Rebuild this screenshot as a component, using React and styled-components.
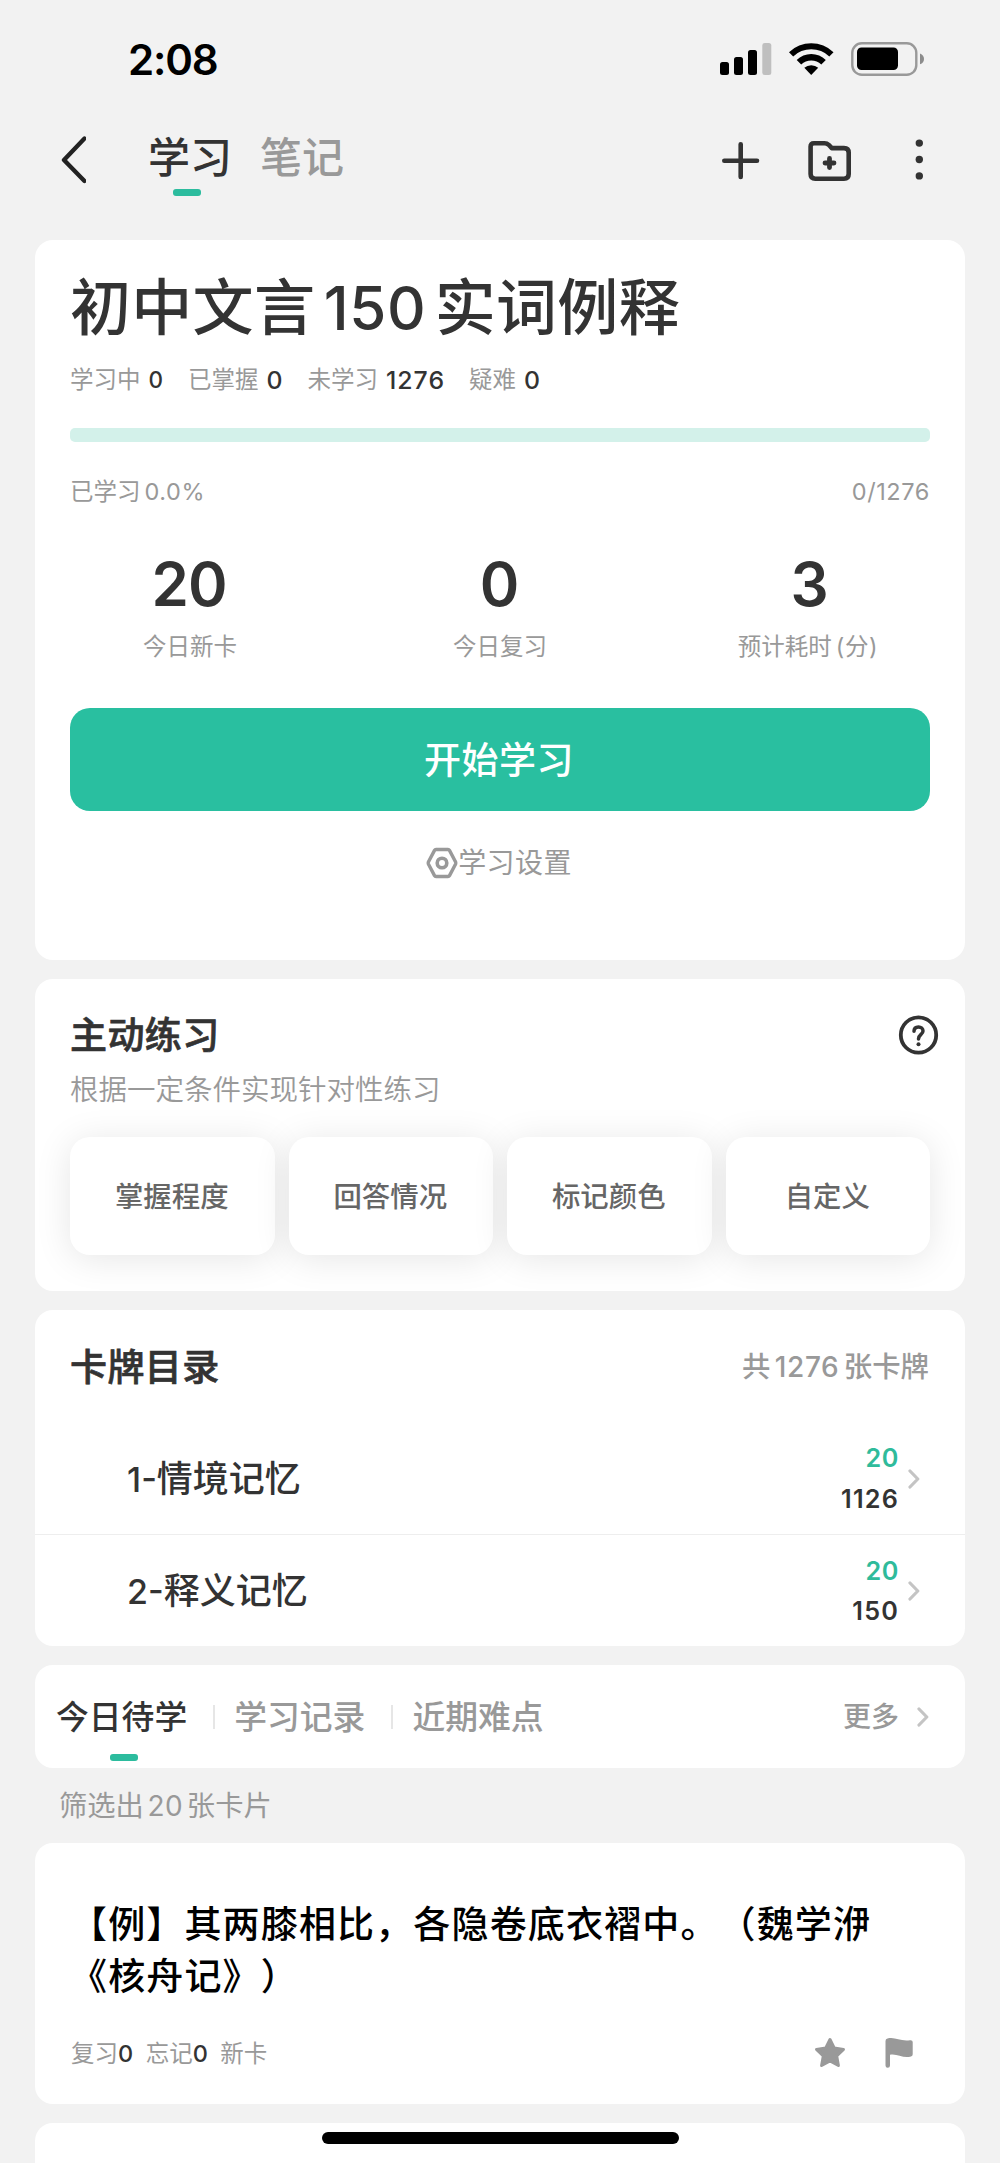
import styled, { createGlobalStyle } from "styled-components";

const GlobalStyle = createGlobalStyle`
  * {
    box-sizing: border-box;
  }

  body {
    margin: 0;
    background: #f2f2f2;
    color: #333;
    font-family: Inter, "Noto Sans CJK SC", sans-serif;
    text-spacing-trim: space-all;
  }
`;

const Screen = styled.div`
  position: relative;
  width: 1000px;
  height: 2163px;
  overflow: hidden;
  background: #f2f2f2;
`;

const StatusBar = styled.div`
  display: flex;
  align-items: center;
  height: 118px;
  padding: 0 76px 0 128px;
`;

const Time = styled.span`
  flex: 1;
  padding-top: 2px;
  font-size: 42px;
  line-height: 50px;
  font-weight: 600;
  letter-spacing: -1.2px;
  color: #000;
`;

const NavBar = styled.div`
  display: flex;
  align-items: center;
  height: 84px;
  padding: 0 76px 0 60px;
`;

const NavTabs = styled.div`
  display: flex;
  flex: 1;
  gap: 28px;
  margin-left: 62px;
`;

const NavTab = styled.div`
  position: relative;
  height: 84px;
  font-size: 42px;
  line-height: 79px;
  font-weight: 500;
  color: ${(props) => (props.$active ? "#333" : "#999")};
`;

const Underline = styled.span`
  position: absolute;
  left: 50%;
  bottom: ${(props) => props.$bottom}px;
  width: 28px;
  height: 7px;
  margin-left: ${(props) => props.$shift}px;
  border-radius: 3px;
  background: #2cbc9e;
`;

const NavActions = styled.div`
  display: flex;
  align-items: center;
`;

const Content = styled.div`
  display: flex;
  flex-direction: column;
  gap: 19px;
  padding: 38px 35px 0;
`;

const Card = styled.section`
  flex: none;
  height: ${(props) => props.$height}px;
  border-radius: 18px;
  background: #fff;
  overflow: hidden;
`;

const DeckCard = styled(Card)`
  padding: 28px 35px 0;
`;

const DeckTitle = styled.h1`
  margin: 0;
  font-size: 61px;
  line-height: 80px;
  font-weight: 500;
  letter-spacing: 0.3px;
  white-space: nowrap;
`;

const Num = styled.span`
  margin: 0 ${(props) => props.$gap}px;
  font-size: ${(props) => props.$size}px;
  line-height: 1;
  letter-spacing: 0.6px;
`;

const Stats = styled.div`
  display: flex;
  gap: 24px;
  margin-top: 17px;
`;

const Stat = styled.div`
  display: flex;
  gap: 8px;
  font-size: 23.5px;
  line-height: 30px;
  color: #999;
`;

const StatValue = styled.span`
  font-size: ${(props) => (props.$small ? 22.5 : 24.8)}px;
  font-weight: 500;
  letter-spacing: 1px;
  color: #333;
`;

const Progress = styled.div`
  height: 14px;
  margin-top: 33px;
  border-radius: 5px;
  background: #d3f1ea;
`;

const ProgressBar = styled.div`
  height: 100%;
  border-radius: 5px;
  background: #29bfa0;
`;

const ProgressInfo = styled.div`
  display: flex;
  justify-content: space-between;
  margin-top: 35px;
  font-size: 23.5px;
  line-height: 30px;
  color: #999;
`;

const ProgressCount = styled.span`
  letter-spacing: 0.6px;
`;

const Metrics = styled.div`
  display: grid;
  grid-template-columns: repeat(3, 1fr);
  margin: 45px -35px 0;
  text-align: center;
`;

const MetricValue = styled.div`
  padding-right: 2px;
  font-size: 60px;
  line-height: 64px;
  font-weight: 600;
  letter-spacing: -1px;
`;

const MetricLabel = styled.div`
  margin-top: 16px;
  font-size: 23.5px;
  line-height: 30px;
  color: #999;
`;

const StartButton = styled.button`
  display: block;
  width: 100%;
  height: 103px;
  margin-top: 46px;
  padding: 2px 2px 0 0;
  border: none;
  border-radius: 20px;
  background: #29bfa0;
  color: #fff;
  font: 500 37px/60px Inter, "Noto Sans CJK SC", sans-serif;
  letter-spacing: 0.5px;
`;

const Settings = styled.div`
  display: flex;
  justify-content: center;
  align-items: center;
  margin-top: 34px;
  padding-right: 2px;
  font-size: 28px;
  line-height: 36px;
  letter-spacing: 0.4px;
  color: #999;
`;

const PracticeCard = styled(Card)`
  padding: 33px 35px 0;
`;

const CardHeader = styled.div`
  display: flex;
  justify-content: space-between;
  align-items: center;
  height: ${(props) => props.$height}px;
`;

const CardTitle = styled.h2`
  margin: 0;
  padding-top: 2px;
  font-size: 37px;
  line-height: 46px;
  font-weight: 500;
  letter-spacing: 0.4px;
  -webkit-text-stroke: 0.7px #333;
`;

const PracticeHint = styled.div`
  margin-top: 15px;
  font-size: 28.5px;
  line-height: 34px;
  font-weight: 350;
  color: #999;
`;

const Tiles = styled.div`
  display: grid;
  grid-template-columns: repeat(4, 1fr);
  gap: 14px;
  margin-top: 30px;
`;

const Tile = styled.button`
  height: 118px;
  padding: 2px 1px 0 0;
  border: none;
  border-radius: 20px;
  background: #fff;
  box-shadow: 0 4px 36px rgba(0, 0, 0, 0.1);
  color: #666;
  font: 500 28.4px/40px Inter, "Noto Sans CJK SC", sans-serif;
`;

const CatalogHeader = styled(CardHeader)`
  padding: 0 36px 0 35px;
`;

const CatalogTotal = styled.span`
  font-size: 28.4px;
  line-height: 40px;
  font-weight: 500;
  color: #999;
`;

const Row = styled.div`
  display: flex;
  align-items: center;
  height: 112px;
  padding: 0 45px 0 92px;
  border-bottom: ${(props) => (props.$last ? "none" : "1px solid #eee")};
`;

const RowTitle = styled.div`
  flex: 1;
  font-size: 36px;
  line-height: 50px;
  font-weight: 500;
`;

const RowIndex = styled.span`
  font-size: 34px;
  line-height: 1;
`;

const Counts = styled.div`
  margin-right: 9px;
  font-size: 25.2px;
  line-height: 40.5px;
  font-weight: 600;
  letter-spacing: 1.2px;
  text-align: right;
`;

const Pending = styled.div`
  letter-spacing: 0.6px;
  color: #2fbb9b;
`;

const TabsCard = styled(Card)`
  display: flex;
  align-items: center;
  padding: 0 36px 0 21px;
`;

const Tab = styled.div`
  position: relative;
  height: 103px;
  font-size: 32.8px;
  line-height: 105px;
  font-weight: 500;
  color: ${(props) => (props.$active ? "#333" : "#999")};
`;

const TabDivider = styled.span`
  width: 2px;
  height: 24px;
  margin: 0 19px 0 26px;
  background: #e6e6e6;
`;

const More = styled.div`
  display: flex;
  align-items: center;
  gap: 18px;
  margin-left: auto;
  font-size: 28px;
  line-height: 40px;
  font-weight: 500;
  color: #999;
`;

const FilterInfo = styled.div`
  height: 75px;
  margin: -19px 0;
  padding-left: 24px;
  font-size: 28.3px;
  line-height: 77px;
  color: #999;
`;

const NoteCard = styled(Card)`
  padding: 56px 35px 0;
`;

const NoteText = styled.p`
  margin: 0;
  font-size: 37px;
  line-height: 52px;
  font-weight: 500;
  letter-spacing: 1.15px;
  color: #000;
`;

const NoteFooter = styled.div`
  display: flex;
  align-items: center;
  gap: 12.5px;
  height: 40px;
  margin-top: 30px;
  padding-left: 1px;
  font-size: 23.5px;
  line-height: 30px;
  color: #999;
`;

const NoteStat = styled.span`
  padding-top: 2px;
`;

const NoteCount = styled.span`
  font-weight: 500;
  color: #333;
`;

const NoteActions = styled.div`
  display: flex;
  gap: 38px;
  margin-left: auto;
  padding-right: 17px;
`;

const HomeIndicator = styled.div`
  position: absolute;
  left: 322px;
  bottom: 19px;
  width: 357px;
  height: 12px;
  border-radius: 6px;
  background: #000;
`;

const SignalIcons = () => (
  <svg width="204" height="36" viewBox="720 41 204 36">
    <rect x="720" y="62" width="9" height="13" rx="2.5" />
    <rect x="734" y="57" width="9" height="18" rx="2.5" />
    <rect x="748" y="50" width="9" height="25" rx="2.5" />
    <rect x="762.3" y="43" width="9" height="32" rx="2.5" fill="#bfbfbf" />
    <path d="M789 52.2A32 32 0 0 1 833.500 52.200L829.300 56.500A26 26 0 0 0 793.200 56.500Z" />
    <path d="M796.700 60A20.500 20.500 0 0 1 825.800 60L821.300 64.500A14.500 14.500 0 0 0 801.200 64.500Z" />
    <path d="M804.300 67.800A10.500 10.500 0 0 1 818.200 67.800L811.200 75Z" />
    <rect
      x="852.3"
      y="43.300"
      width="64"
      height="31.500"
      rx="9.500"
      fill="none"
      stroke="#999"
      strokeWidth="2.400"
    />
    <rect x="857" y="47.500" width="41" height="22.500" rx="4.500" />
    <path d="M920 53.500Q924 55 924 59T920 64.300Z" fill="#8c8c8c" />
  </svg>
);

const BackIcon = () => (
  <svg width="26" height="48" viewBox="-0.500 0 26 48" fill="none">
    <path
      d="M24 2.500L3.500 24L24 45"
      stroke="#222"
      strokeWidth="4.400"
      strokeLinecap="round"
      strokeLinejoin="round"
    />
  </svg>
);

// plus, new folder and overflow menu
const NavIcons = () => (
  <svg width="202" height="44" viewBox="722 138.500 202 44" fill="none">
    <g stroke="#333" strokeLinecap="round" strokeLinejoin="round">
      <path d="M740.700 144.800V177.500M724.300 161.200H757" strokeWidth="4.600" />
      <path
        d="M810.600 147Q810.600 143.700 814 143.700H824.500Q827 143.700 828.700 145.300L831.800 148.600H844Q848.700 148.600 848.700 153.300V174.500Q848.700 179.200 844 179.200H815.300Q810.600 179.200 810.600 174.500Z"
        strokeWidth="4.600"
      />
      <path d="M829.500 159V168M825 163.500H834" strokeWidth="4.800" />
    </g>
    <g fill="#333">
      <circle cx="919.300" cy="143.600" r="3.700" />
      <circle cx="919.300" cy="160" r="3.700" />
      <circle cx="919.300" cy="176.400" r="3.700" />
    </g>
  </svg>
);

const SettingsIcon = () => (
  <svg width="32" height="32" viewBox="0 0 32 32" fill="none" stroke="#999">
    <path
      d="M10 2.500H22Q23 2.500 23.500 3.400L29.600 15Q30 16 29.600 17L23.500 28.600Q23 29.500 22 29.500H10Q9 29.500 8.500 28.600L2.400 17Q2 16 2.400 15L8.500 3.400Q9 2.500 10 2.500Z"
      strokeWidth="3.400"
    />
    <circle cx="16" cy="16" r="4.800" strokeWidth="3.600" />
  </svg>
);

const HelpIcon = styled.svg`
  margin-right: -9px;
`;

const Help = () => (
  <HelpIcon width="41" height="41" viewBox="0 0 41 41" fill="none">
    <circle cx="20.500" cy="20" r="17.700" stroke="#333" strokeWidth="3.800" />
    <path
      d="M16 16.300C16 13.400 18 12 20.500 12S25 13.700 25 16.100C25 19.500 20.500 19.500 20.500 24"
      stroke="#333"
      strokeWidth="3.500"
      strokeLinecap="round"
    />
    <circle cx="20.500" cy="29.300" r="2" fill="#333" />
  </HelpIcon>
);

const Chevron = () => (
  <svg width="12" height="20" viewBox="0 0 12 20" fill="none">
    <path
      d="M2 2L9.800 10L2 18"
      stroke="#c4c4c4"
      strokeWidth="3.200"
      strokeLinecap="round"
      strokeLinejoin="round"
    />
  </svg>
);

const StarIcon = () => (
  <svg width="34" height="34" viewBox="0 0 34 34" fill="#999">
    <path
      d="M17 3.500L21.200 12L30.500 13.400L23.700 20L25.400 29.500L17 25L8.600 29.500L10.300 20L3.500 13.400L12.800 12Z"
      stroke="#999"
      strokeWidth="3"
      strokeLinejoin="round"
    />
  </svg>
);

const FlagIcon = () => (
  <svg width="28" height="34" viewBox="0 0 28 34" fill="#999">
    <path d="M0.500 5Q0.500 3 2.500 2.600C10 0.500 15 5.800 25 4.300Q27.700 4 27.700 6V18.300Q27.700 20 26 20.500C18 23 12 17 5 18.700V29.500Q5 31.800 2.700 31.800Q0.500 31.800 0.500 29.500Z" />
  </svg>
);

const stats = [
  { label: "学习中", value: 0, small: true },
  { label: "已掌握", value: 0 },
  { label: "未学习", value: 1276 },
  { label: "疑难", value: 0 },
];

const metrics = [
  { label: "今日新卡", value: 20 },
  { label: "今日复习", value: 0 },
  { label: <>预计耗时<Num $gap={4}>(分)</Num></>, value: 3 },
];

const chapters = [
  { title: "情境记忆", pending: 20, total: 1126 },
  { title: "释义记忆", pending: 20, total: 150 },
];

const App = () => {
  const learned = 0;

  return (
    <>
      <GlobalStyle />
      <Screen>
        <StatusBar>
          <Time>2:08</Time>
          <SignalIcons />
        </StatusBar>
        <NavBar>
          <BackIcon />
          <NavTabs>
            <NavTab $active>
              学习
              <Underline $bottom={6} $shift={-17} />
            </NavTab>
            <NavTab>笔记</NavTab>
          </NavTabs>
          <NavActions>
            <NavIcons />
          </NavActions>
        </NavBar>

        <Content>
          <DeckCard $height={720}>
            <DeckTitle>
              初中文言<Num $size={60} $gap={8.5}>150</Num>实词例释
            </DeckTitle>
            <Stats>
              {stats.map((stat) => (
                <Stat key={stat.label}>
                  {stat.label}
                  <StatValue $small={stat.small}>{stat.value}</StatValue>
                </Stat>
              ))}
            </Stats>
            <Progress>
              <ProgressBar style={{ width: `${learned}%` }} />
            </Progress>
            <ProgressInfo>
              <span>
                已学习<Num $gap={4}>{learned.toFixed(1)}%</Num>
              </span>
              <ProgressCount>0/1276</ProgressCount>
            </ProgressInfo>
            <Metrics>
              {metrics.map((metric, i) => (
                <div key={i}>
                  <MetricValue>{metric.value}</MetricValue>
                  <MetricLabel>{metric.label}</MetricLabel>
                </div>
              ))}
            </Metrics>
            <StartButton>开始学习</StartButton>
            <Settings>
              <SettingsIcon />
              学习设置
            </Settings>
          </DeckCard>

          <PracticeCard $height={312}>
            <CardHeader $height={46}>
              <CardTitle>主动练习</CardTitle>
              <Help />
            </CardHeader>
            <PracticeHint>根据一定条件实现针对性练习</PracticeHint>
            <Tiles>
              <Tile>掌握程度</Tile>
              <Tile>回答情况</Tile>
              <Tile>标记颜色</Tile>
              <Tile>自定义</Tile>
            </Tiles>
          </PracticeCard>

          <Card $height={336}>
            <CatalogHeader $height={113}>
              <CardTitle>卡牌目录</CardTitle>
              <CatalogTotal>
                共<Num $size={28} $gap={4.5}>1276</Num>张卡牌
              </CatalogTotal>
            </CatalogHeader>
            {chapters.map((chapter, i) => (
              <Row key={chapter.title} $last={i === chapters.length - 1}>
                <RowTitle>
                  <RowIndex>{i + 1}-</RowIndex>
                  {chapter.title}
                </RowTitle>
                <Counts>
                  <Pending>{chapter.pending}</Pending>
                  <div>{chapter.total}</div>
                </Counts>
                <Chevron />
              </Row>
            ))}
          </Card>

          <TabsCard $height={103}>
            <Tab $active>
              今日待学
              <Underline $bottom={7} $shift={-12} />
            </Tab>
            <TabDivider />
            <Tab>学习记录</Tab>
            <TabDivider />
            <Tab>近期难点</Tab>
            <More>
              更多
              <Chevron />
            </More>
          </TabsCard>

          <FilterInfo>
            筛选出<Num $size={28} $gap={3.5}>20</Num>张卡片
          </FilterInfo>

          <NoteCard $height={261}>
            <NoteText>
              【例】其两膝相比，各隐卷底衣褶中。（魏学洢《核舟记》）
            </NoteText>
            <NoteFooter>
              <NoteStat>
                复习<NoteCount>0</NoteCount>
              </NoteStat>
              <NoteStat>
                忘记<NoteCount>0</NoteCount>
              </NoteStat>
              <NoteStat>新卡</NoteStat>
              <NoteActions>
                <StarIcon />
                <FlagIcon />
              </NoteActions>
            </NoteFooter>
          </NoteCard>

          <Card $height={261} />
        </Content>
        <HomeIndicator />
      </Screen>
    </>
  );
};

export default App;
